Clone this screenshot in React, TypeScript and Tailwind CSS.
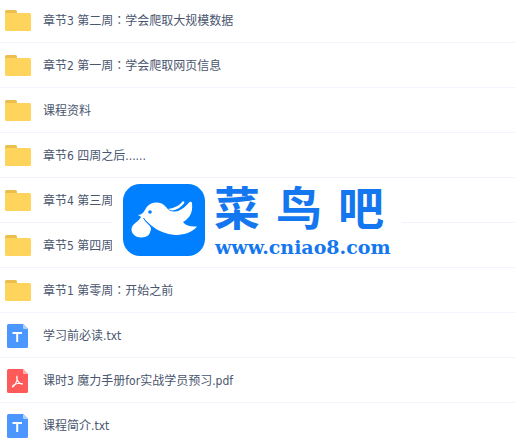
import { Fragment } from "react";

type FileKind = "folder" | "txt" | "pdf";

interface FileItem {
  name: string;
  kind: FileKind;
}

const files: FileItem[] = [
  { name: "章节3 第二周：学会爬取大规模数据", kind: "folder" },
  { name: "章节2 第一周：学会爬取网页信息", kind: "folder" },
  { name: "课程资料", kind: "folder" },
  { name: "章节6 四周之后......", kind: "folder" },
  { name: "章节4 第三周", kind: "folder" },
  { name: "章节5 第四周", kind: "folder" },
  { name: "章节1 第零周：开始之前", kind: "folder" },
  { name: "学习前必读.txt", kind: "txt" },
  { name: "课时3 魔力手册for实战学员预习.pdf", kind: "pdf" },
  { name: "课程简介.txt", kind: "txt" },
];

function FolderIcon() {
  return (
    <svg width="26" height="21" viewBox="0 0 26 21" aria-hidden="true">
      <path d="M0 1.5Q0 0 1.5 0H10.5Q12 0 12 1.5V6H0Z" fill="#ecbe4d" />
      <path d="M0 3H24.5Q26 3 26 4.5V19.5Q26 21 24.5 21H1.5Q0 21 0 19.5Z" fill="#ffd45c" />
    </svg>
  );
}

function DocIcon({ kind }: { kind: "txt" | "pdf" }) {
  const isPdf = kind === "pdf";
  return (
    <svg width="21" height="24" viewBox="0 0 21 24" aria-hidden="true">
      <path
        d="M1.5 0H16L21 5V22.5Q21 24 19.5 24H1.5Q0 24 0 22.5V1.5Q0 0 1.5 0Z"
        fill={isPdf ? "#ff5a5a" : "#4c96ff"}
      />
      <path d="M16 0L21 5H17Q16 5 16 4Z" fill={isPdf ? "#ffb4b4" : "#add0ff"} />
      {isPdf ? (
        <path
          d="M9.8 7C11.2 9.8 9.4 14.6 6 17.8C5 18.4 5.4 16.6 7.2 15.7C9.6 14.5 12.4 13.8 15.2 14.6C16 15.4 14.2 15.4 12.6 14C10.8 12.4 9.4 10 9.8 7Z"
          fill="none"
          stroke="#fff"
          strokeWidth="1.1"
          strokeLinejoin="round"
        />
      ) : (
        <path d="M5.5 9H15M10.2 9V18" fill="none" stroke="#fff" strokeWidth="2" />
      )}
    </svg>
  );
}

function BirdLogo() {
  return (
    <svg width="84" height="74" viewBox="0 0 84 74" aria-hidden="true">
      <rect x="1" y="1" width="82" height="72" rx="17" fill="#0080ff" />
      {/* body, wing and tail */}
      <path
        d="M16 32C20 32 22 29 24 25C29 18 39 18 44 24C46 27 49 29 53 28.5C59 28 63 24 67 19.5C68 18.5 70 18.5 70 20.5C71 29 68 35 61 39C64 43 69 44 75 43.5C70 50 61 52 53 52C44 51 36 48 30 43C26 40 24 37 21 35Z"
        fill="#fff"
      />
      {/* back feather */}
      <path d="M46 26C53 25 58 22 60.5 18.5C62 18 63 19 62 20.5C59 24 55 27 50 27.5Z" fill="#fff" />
      {/* bundle */}
      <path
        d="M19 33C19 38 9.5 40 9.5 46.5C9.5 51 14 54.5 19 54.5C25 54.5 29 51 29 46C29 41 22 39 21 33Z"
        fill="#fff"
      />
      <path d="M21.5 35C24 39 26 41 29.5 43.5C30 46 29 49 28 51" fill="none" stroke="#0080ff" strokeWidth="1" />
      <circle cx="28" cy="29" r="1.8" fill="#0080ff" />
    </svg>
  );
}

function SiteBadge() {
  return (
    <div className="absolute left-28 top-[180px] flex w-[290px] gap-2 bg-white pb-1 pl-[10px] pt-[3px] text-[#1477ef]">
      <BirdLogo />
      <div className="min-w-0 flex-1">
        <div className="flex gap-4 font-['DejaVu_Serif','Noto_Sans_CJK_SC',sans-serif] text-[46px] font-bold leading-[52px]">
          <span>菜</span>
          <span>鸟</span>
          <span>吧</span>
        </div>
        <div className="whitespace-nowrap pl-px font-['DejaVu_Serif',serif] text-[19px] font-bold leading-6">
          www.cniao8.com
        </div>
      </div>
    </div>
  );
}

// The full-width colon is centred in its cell only in the traditional font.
function FileName({ name }: { name: string }) {
  return (
    <span className="whitespace-nowrap pt-[2px]">
      {name.split("：").map((part, i) => (
        <Fragment key={part}>
          {i > 0 && (
            <span lang="zh-Hant" className="font-['Noto_Sans_CJK_TC',sans-serif] leading-none">
              ：
            </span>
          )}
          {part}
        </Fragment>
      ))}
    </span>
  );
}

function FileRow({ file }: { file: FileItem }) {
  return (
    <li className="flex h-[45px] items-center border-b border-[#f1f5fb] pl-[5px]">
      <span className="flex w-[38px] shrink-0">
        {file.kind === "folder" ? (
          <FolderIcon />
        ) : (
          <span className="pl-[2px] pt-px">
            <DocIcon kind={file.kind} />
          </span>
        )}
      </span>
      <FileName name={file.name} />
    </li>
  );
}

export default function App() {
  return (
    <main className="relative overflow-hidden bg-white font-['DejaVu_Sans_Condensed','Noto_Sans_CJK_SC',sans-serif] text-xs text-[#4a566e]">
      <ul className="-mt-[2px]">
        {files.map((file) => (
          <FileRow key={file.name} file={file} />
        ))}
      </ul>
      <SiteBadge />
    </main>
  );
}
